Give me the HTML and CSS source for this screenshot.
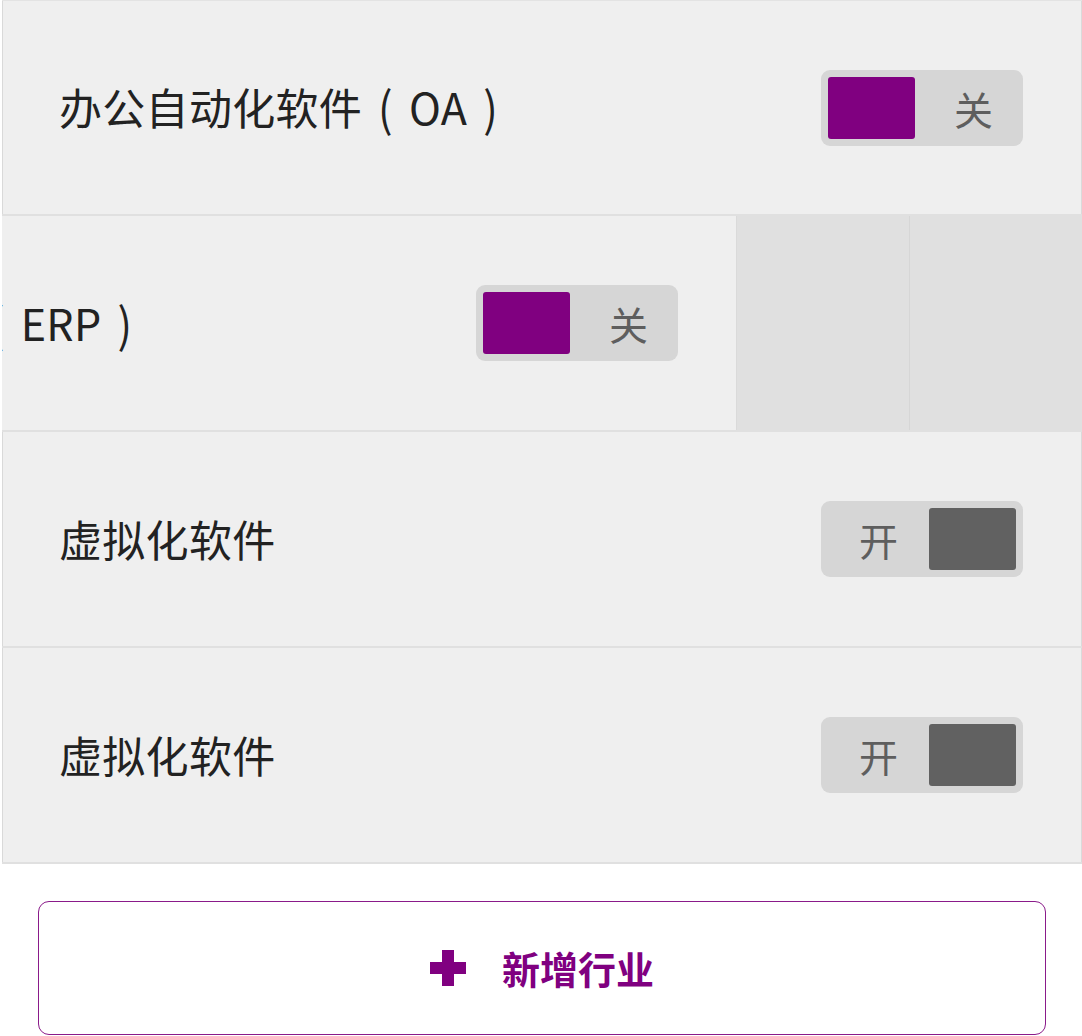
FILE: index.html
```html
<!DOCTYPE html>
<html lang="zh-CN">
<head>
<meta charset="utf-8">
<title>行业设置</title>
<link rel="stylesheet" href="styles.css">
</head>
<body>
<div class="list">
  <div class="row">
    <div class="row-content">
      <span class="row-title">办公自动化软件<span class="paren">(</span>OA<span class="paren">)</span></span>
      <div class="toggle off"><span class="knob"></span><span class="label">关</span></div>
    </div>
  </div>
  <div class="row swiped">
    <div class="row-content">
      <span class="row-title">企业资源计划<span class="paren">(</span>ERP<span class="paren">)</span></span>
      <div class="toggle off"><span class="knob"></span><span class="label">关</span></div>
    </div>
    <div class="actions">
      <div class="action"></div>
      <div class="action"></div>
    </div>
  </div>
  <div class="row">
    <div class="row-content">
      <span class="row-title">虚拟化软件</span>
      <div class="toggle on"><span class="label">开</span><span class="knob"></span></div>
    </div>
  </div>
  <div class="row">
    <div class="row-content">
      <span class="row-title">虚拟化软件</span>
      <div class="toggle on"><span class="label">开</span><span class="knob"></span></div>
    </div>
  </div>
</div>
<button class="add-btn" type="button">
  <svg class="plus" width="36" height="36" viewBox="0 0 36 36" aria-hidden="true">
    <rect x="12" y="0" width="12" height="36" fill="#800080"/>
    <rect x="0" y="12" width="36" height="12" fill="#800080"/>
  </svg>
  <span class="add-text">新增行业</span>
</button>
</body>
</html>
```
FILE: styles.css
```css
html, body {
  margin: 0;
  padding: 0;
  background: #ffffff;
}
body {
  font-family: "Noto Sans CJK SC", "Noto Sans", sans-serif;
  width: 1082px;
}
.list {
  margin-left: 2px;
  width: 1080px;
  border-top: 1px solid #e3e3e3;
}
.row {
  display: flex;
  overflow: hidden;
  border-bottom: 2px solid #e0e0e0;
  background: #e0e0e0;
}
.row-content {
  box-sizing: border-box;
  flex: 0 0 1080px;
  width: 1080px;
  height: 214px;
  display: flex;
  align-items: center;
  justify-content: space-between;
  padding: 0 58px 0 56px;
  background: #efefef;
  border-left: 1px solid #d9d9d9;
  border-right: 1px solid #dadada;
}
.row:first-child .row-content {
  height: 213px;
}
.swiped .row-content {
  margin-left: -345px;
}
.row-title {
  font-size: 43px;
  color: #222222;
  white-space: nowrap;
  margin-top: -3px;
  letter-spacing: 0.3px;
}
.paren {
  display: inline-block;
  margin: 0 16px;
  transform: scaleY(1.1);
}
.actions {
  flex: 0 0 345px;
  display: flex;
}
.action {
  flex: 1;
  background: #e0e0e0;
}
.action + .action {
  border-left: 1px solid #d6d6d6;
}
.toggle {
  box-sizing: border-box;
  width: 202px;
  height: 76px;
  padding: 7px;
  border-radius: 9px;
  background: #d6d6d6;
  display: flex;
  align-items: center;
}
.knob {
  width: 87px;
  height: 62px;
  border-radius: 3px;
  flex: 0 0 87px;
}
.toggle.off .knob {
  background: #800080;
}
.toggle.on .knob {
  background: #616161;
}
.label {
  flex: 1;
  text-align: center;
  font-size: 39px;
  color: #5e5e5e;
  line-height: 62px;
}
.toggle.off .label {
  padding-left: 16px;
}
.add-btn {
  box-sizing: border-box;
  display: flex;
  align-items: center;
  justify-content: center;
  gap: 36px;
  margin: 37px 0 0 38px;
  width: 1008px;
  height: 134px;
  border: 1px solid #8a1a8a;
  border-radius: 11px;
  background: #ffffff;
  padding: 0;
  font-family: "Noto Sans CJK SC", "Noto Sans", sans-serif;
}
.plus {
  display: block;
  flex: 0 0 36px;
}
.add-text {
  font-size: 38px;
  font-weight: 700;
  color: #800080;
  line-height: 1;
}
```
